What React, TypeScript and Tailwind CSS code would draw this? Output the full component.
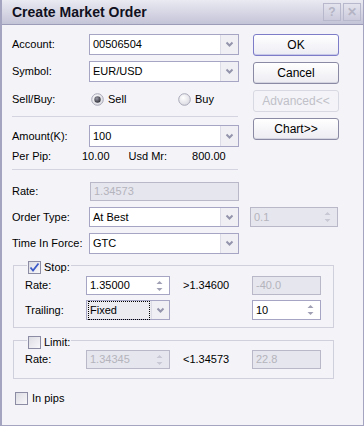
import React from "react"

const font = { fontFamily: '"Liberation Sans", Arial, sans-serif' }

function Chevron() {
  return (
    <svg width="9" height="7" viewBox="0 0 9 7">
      <path d="M1.5 1.5 L4.5 4.5 L7.5 1.5" fill="none" stroke="#9494ac" strokeWidth="2" />
    </svg>
  )
}

function Combo({ value, w = "w-[150px]", h = "h-[21px]", focus }: { value: string; w?: string; h?: string; focus?: boolean }) {
  return (
    <div className={`${w} ${h} flex border border-[#a6a6c4] bg-white`}>
      <div className={`flex-1 flex items-center px-[2px] ${focus ? "bg-[#ebebf0]" : ""}`}>
        <span className={`px-[1px] leading-none ${focus ? "outline outline-1 outline-dotted outline-black py-[3px] w-full" : ""}`}>{value}</span>
      </div>
      <div className="w-[18px] flex items-center justify-center bg-[#f0f0f4] border-l border-[#dcdce6]">
        <Chevron />
      </div>
    </div>
  )
}

function SpinArrows({ disabled }: { disabled?: boolean }) {
  const c = disabled ? "#c8c8d4" : "#a0a0b4"
  return (
    <svg width="7" height="14" viewBox="0 0 7 14">
      <path d="M0.5 5 L3.5 2 L6.5 5 Z" fill={c} />
      <path d="M0.5 9 L3.5 12 L6.5 9 Z" fill={c} />
    </svg>
  )
}

function Spin({ value, w, h = "h-[19px]", disabled }: { value: string; w: string; h?: string; disabled?: boolean }) {
  return (
    <div
      className={`${w} ${h} flex items-center border ${
        disabled ? "border-[#b8b8c8] bg-[#e6e6ee] text-[#b4b4bc]" : "border-[#a6a6c4] bg-white text-black"
      }`}
    >
      <span className="flex-1 pl-[3px]">{value}</span>
      <span className="pr-[6px] flex items-center">
        <SpinArrows disabled={disabled} />
      </span>
    </div>
  )
}

function Field({ value, w, h = "h-[19px]" }: { value: string; w: string; h?: string }) {
  return (
    <div className={`${w} ${h} flex items-center pl-[3px] border border-[#b8b8c8] bg-[#e6e6ee] text-[#b4b4bc]`}>
      {value}
    </div>
  )
}

function Btn({ label, disabled, def }: { label: string; disabled?: boolean; def?: boolean }) {
  return (
    <div
      className={`w-[86px] h-[22px] flex items-center justify-center rounded-[3px] border text-[12px] ${
        disabled
          ? "border-[#d8d8e2] bg-[#f4f4f8] text-[#c0c0c8]"
          : def
          ? "border-[#7c7cc8] bg-gradient-to-b from-white to-[#ececf4] shadow-[inset_0_-1px_0_#c8c8e8]"
          : "border-[#8a8aa4] bg-gradient-to-b from-white to-[#ececf2] shadow-[inset_0_-1px_0_#d4d4e0]"
      }`}
    >
      {label}
    </div>
  )
}

function Radio({ checked }: { checked?: boolean }) {
  return (
    <svg width="13" height="13" viewBox="0 0 13 13">
      <defs>
        <radialGradient id="rg" cx="0.4" cy="0.35" r="0.7">
          <stop offset="0" stopColor="#ffffff" />
          <stop offset="1" stopColor="#d8d8e0" />
        </radialGradient>
        <radialGradient id="dot" cx="0.4" cy="0.35" r="0.7">
          <stop offset="0" stopColor="#9a9aa8" />
          <stop offset="1" stopColor="#2c2c34" />
        </radialGradient>
      </defs>
      <circle cx="6.5" cy="6.5" r="5.8" fill="url(#rg)" stroke="#a8a8b8" />
      {checked && <circle cx="6.5" cy="6.5" r="3.2" fill="url(#dot)" />}
    </svg>
  )
}

function Check({ checked }: { checked?: boolean }) {
  return (
    <div className="w-[13px] h-[13px] border border-[#8c8ca4] bg-gradient-to-br from-[#dcdce4] to-[#f8f8fa] flex items-center justify-center">
      {checked && (
        <svg width="11" height="11" viewBox="0 0 11 11">
          <path d="M1.5 5.5 L4 8.5 L9.5 1.5" fill="none" stroke="#3c5ac8" strokeWidth="1.8" />
        </svg>
      )}
    </div>
  )
}

export default function App() {
  return (
    <div
      style={font}
      className="w-[364px] h-[426px] flex flex-col bg-[#f4f4f8] border-l-2 border-r border-b border-[#a4a4c0] text-[11px] text-black overflow-hidden"
    >
      {/* Title bar */}
      <div className="h-[25px] shrink-0 flex items-center justify-between pl-[10px] pr-[2px] bg-gradient-to-b from-[#eaeaf2] to-[#c4c4d8] border-b border-[#9c9cb8]">
        <span className="font-bold text-[14px] text-[#101020]">Create Market Order</span>
        <div className="flex gap-[2px]">
          <div className="w-[18px] h-[18px] flex items-center justify-center border border-[#b8b8cc] text-[#b4b4c4] font-bold text-[12px]">?</div>
          <div className="w-[18px] h-[18px] flex items-center justify-center border border-[#b8b8cc] text-[#b4b4c4] font-bold text-[12px]">✕</div>
        </div>
      </div>

      <div className="flex-1 flex flex-col pl-[10px]">
        <div className="flex pt-[9px]">
          {/* Left column */}
          <div className="w-[228px] flex flex-col">
            <div className="flex items-center h-[21px]">
              <span className="w-[77px]">Account:</span>
              <Combo value="00506504" />
            </div>
            <div className="flex items-center h-[21px] mt-[6px]">
              <span className="w-[77px]">Symbol:</span>
              <Combo value="EUR/USD" />
            </div>
            <div className="flex items-center h-[18px] mt-[8px]">
              <span className="w-[79px]">Sell/Buy:</span>
              <Radio checked />
              <span className="ml-[4px] w-[70px]">Sell</span>
              <Radio />
              <span className="ml-[4px]">Buy</span>
            </div>
            <div className="h-px bg-[#d4d4e0] mt-[8px] mr-[2px]" />
            <div className="flex items-center h-[22px] mt-[8px]">
              <span className="w-[77px]">Amount(K):</span>
              <Combo value="100" h="h-[22px]" />
            </div>
            <div className="flex items-center h-[14px] mt-[2px]">
              <span className="w-[70px]">Per Pip:</span>
              <span>10.00</span>
              <span className="ml-[19px]">Usd Mr:</span>
              <span className="ml-[25px]">800.00</span>
            </div>
            <div className="h-px bg-[#d4d4e0] mt-[6px] mr-[2px]" />
          </div>
          {/* Right buttons */}
          <div className="flex flex-col ml-[13px]">
            <Btn label="OK" def />
            <div className="mt-[6px]"><Btn label="Cancel" /></div>
            <div className="mt-[6px]"><Btn label="Advanced<<" disabled /></div>
            <div className="mt-[6px]"><Btn label="Chart>>" /></div>
          </div>
        </div>

        <div className="flex items-center h-[19px] mt-[12px]">
          <span className="w-[78px]">Rate:</span>
          <Field value="1.34573" w="w-[149px]" />
        </div>
        <div className="flex items-center h-[20px] mt-[6px]">
          <span className="w-[77px]">Order Type:</span>
          <Combo value="At Best" h="h-[20px]" />
          <div className="ml-[11px]">
            <Spin value="0.1" w="w-[88px]" h="h-[20px]" disabled />
          </div>
        </div>
        <div className="flex items-center h-[21px] mt-[6px]">
          <span className="w-[77px]">Time In Force:</span>
          <Combo value="GTC" />
        </div>

        {/* Stop group */}
        <div className="relative mt-[11px] ml-[1px] w-[321px] h-[63px] border border-[#d0d0dc] flex flex-col pl-[11px] pt-[10px]">
          <div className="absolute -top-[7px] left-[13px] flex items-center gap-[3px] bg-[#f4f4f8] px-[1px]">
            <Check checked />
            <span>Stop:</span>
          </div>
          <div className="flex items-center h-[19px]">
            <span className="w-[61px]">Rate:</span>
            <Spin value="1.35000" w="w-[84px]" />
            <span className="ml-[13px] w-[69px]">&gt;1.34600</span>
            <Field value="-40.0" w="w-[69px]" />
          </div>
          <div className="flex items-center h-[20px] mt-[5px]">
            <span className="w-[61px]">Trailing:</span>
            <Combo value="Fixed" w="w-[84px]" h="h-[20px]" focus />
            <div className="ml-[82px]">
              <Spin value="10" w="w-[69px]" h="h-[20px]" />
            </div>
          </div>
        </div>

        {/* Limit group */}
        <div className="relative mt-[12px] ml-[1px] w-[321px] h-[39px] border border-[#d0d0dc] flex flex-col pl-[11px] pt-[9px]">
          <div className="absolute -top-[7px] left-[13px] flex items-center gap-[3px] bg-[#f4f4f8] px-[1px]">
            <Check />
            <span>Limit:</span>
          </div>
          <div className="flex items-center h-[19px]">
            <span className="w-[61px]">Rate:</span>
            <Spin value="1.34345" w="w-[84px]" disabled />
            <span className="ml-[13px] w-[69px]">&lt;1.34573</span>
            <Field value="22.8" w="w-[69px]" />
          </div>
        </div>

        <div className="flex items-center gap-[4px] mt-[11px] ml-[3px]">
          <Check />
          <span>In pips</span>
        </div>
      </div>
    </div>
  )
}
